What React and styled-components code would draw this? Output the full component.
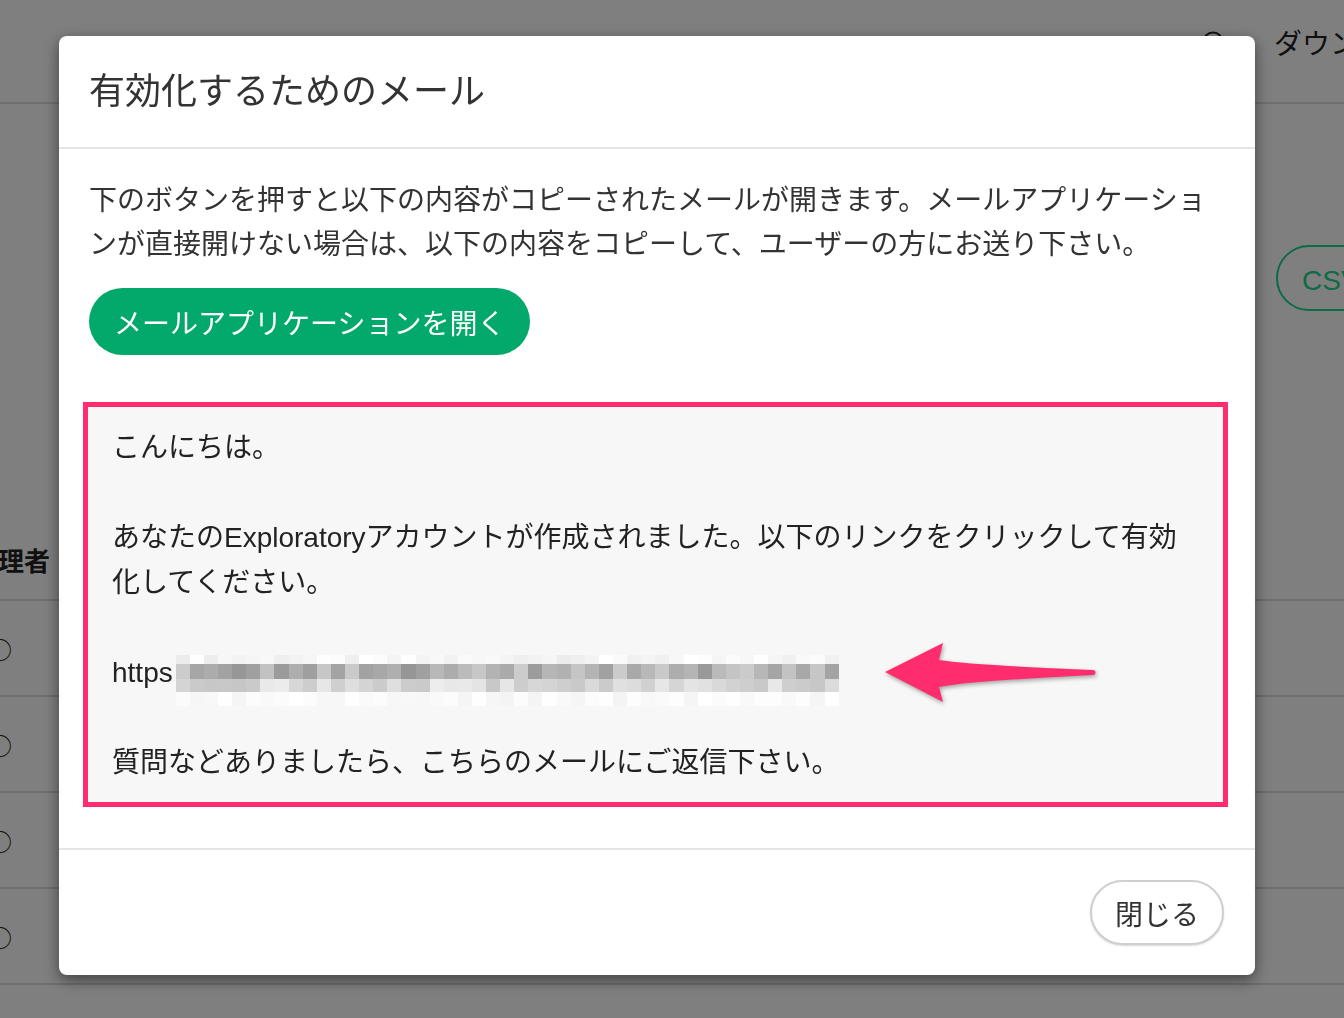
import React from 'react';
import styled, { createGlobalStyle } from 'styled-components';

const GlobalStyle = createGlobalStyle`
  html, body {
    margin: 0;
    padding: 0;
  }
  body {
    width: 1344px;
    height: 1018px;
    overflow: hidden;
    background: #fff;
    color: #333;
    font-family: "Liberation Sans", "Noto Sans CJK JP", sans-serif;
  }
`;

// Page behind the dialog
const Page = styled.div`
  width: 1344px;
  height: 1018px;
  overflow: hidden;
  background: #fff;
`;

const TopBar = styled.header`
  height: 104px;
  box-sizing: border-box;
  border-bottom: 2px solid #dedede;
  display: grid;
  grid-template-columns: 1fr 142px;
`;

const TopRight = styled.div`
  display: flex;
  align-items: center;
  gap: 50px;
  height: 28px;
  margin-top: 28px;
  white-space: nowrap;
  overflow: hidden;
  font-size: 28px;
  color: #222;

  & > * {
    flex-shrink: 0;
  }
`;

const Toolbar = styled.div`
  height: 416px;
  box-sizing: border-box;
  padding-top: 141px;
  display: grid;
  grid-template-columns: 1fr 68px;
  overflow: hidden;
`;

const CsvButton = styled.button`
  width: 200px;
  height: 66px;
  border: 2px solid #1bd68d;
  border-radius: 33px;
  background: #fff;
  color: #1bd68d;
  font-family: inherit;
  font-size: 28px;
  text-align: left;
  white-space: nowrap;
  padding: 0 24px;
`;

const TableHead = styled.div`
  height: 81px;
  box-sizing: border-box;
  border-bottom: 2px solid #dcdcdc;
  display: flex;
  align-items: center;
  margin-left: -28px;
  font-size: 26px;
  font-weight: 700;
  color: #222;
`;

const TableRow = styled.div`
  height: 96px;
  box-sizing: border-box;
  border-bottom: 2px solid #dcdcdc;
  display: flex;
  align-items: center;
  margin-left: -12px;
  font-family: "Noto Sans CJK JP", sans-serif;
  font-size: 24px;
  color: #222;
`;

// Dialog
const Overlay = styled.div`
  position: fixed;
  inset: 0;
  background: rgba(0, 0, 0, 0.5);
  padding: 36px 0 0 59px;
`;

const Modal = styled.div`
  width: 1196px;
  background: #fff;
  border-radius: 8px;
  box-shadow: 0 5px 15px rgba(0, 0, 0, 0.5);
  overflow: hidden;
`;

const ModalHeader = styled.div`
  height: 113px;
  box-sizing: border-box;
  border-bottom: 2px solid #e5e5e5;
  padding: 0 30px;
  display: flex;
  align-items: center;
`;

const Title = styled.h4`
  margin: 0;
  font-size: 36px;
  font-weight: 400;
  line-height: 1;
  color: #333;
`;

const ModalBody = styled.div`
  padding: 30px 30px 41px 30px;
`;

const Lead = styled.p`
  margin: 0;
  font-size: 28px;
  line-height: 44px;
  color: #333;
`;

const MailButton = styled.button`
  margin-top: 21px;
  height: 67px;
  padding: 0 25px;
  border: none;
  border-radius: 34px;
  background: #03a96b;
  color: #fff;
  font-family: inherit;
  font-size: 28px;
`;

const MailBox = styled.div`
  position: relative;
  margin: 47px 0 0 -6px;
  width: 1145px;
  box-sizing: border-box;
  border: 5px solid #ff2d6d;
  background: #f7f7f7;
  padding: 18px 24px 17px 24px;
  font-size: 28px;
  line-height: 45px;
  color: #222;
`;

const Line = styled.div`
  min-height: 45px;
`;

const UrlLine = styled.div`
  height: 45px;
  display: flex;
  align-items: center;
`;

const Blur = styled.div`
  margin: 15px 0 0 3px;
  width: 663px;
  height: 51px;
  display: grid;
  grid-template-columns: repeat(47, 1fr);
  grid-template-rows: 9px 15px 13px 14px;
`;

const Cell = styled.span`
  display: block;
`;

const Arrow = styled.svg`
  position: absolute;
  left: 792px;
  top: 225px;
  overflow: visible;
  filter: drop-shadow(1px 2px 2px rgba(0, 0, 0, 0.35));
`;

const ModalFooter = styled.div`
  height: 127px;
  box-sizing: border-box;
  border-top: 2px solid #e5e5e5;
  padding: 0 31px;
  display: flex;
  align-items: center;
  justify-content: flex-end;
`;

const CloseButton = styled.button`
  height: 65px;
  padding: 0 23px;
  border: 2px solid #cfcfcf;
  border-radius: 33px;
  background: #fff;
  box-shadow: 0 1px 2px rgba(0, 0, 0, 0.15);
  color: #333;
  font-family: inherit;
  font-size: 28px;
`;

// pixelated blur of the hidden URL
const rowRanges = [
  [236, 255],
  [150, 205],
  [198, 238],
  [244, 255],
];

const shade = (r, c) => {
  const n = Math.sin(r * 91.7 + c * 12.9898) * 43758.5453;
  const t = n - Math.floor(n);
  const [lo, hi] = rowRanges[r];
  return Math.round(lo + (hi - lo) * t);
};

const blurCells = [];
for (let r = 0; r < 4; r++) {
  for (let c = 0; c < 47; c++) {
    const g = shade(r, c);
    blurCells.push(`rgb(${g},${g},${g})`);
  }
}

const rows = [0, 1, 2, 3];

const App = () => {
  return (
    <>
      <GlobalStyle />
      <Page>
        <TopBar>
          <div />
          <TopRight>
            <svg width="22" height="22" viewBox="0 0 22 22">
              <circle cx="11" cy="11" r="9.5" fill="none" stroke="#222" strokeWidth="2" />
            </svg>
            <span>ダウンロード</span>
          </TopRight>
        </TopBar>
        <Toolbar>
          <div />
          <div>
            <CsvButton>CSVで出力</CsvButton>
          </div>
        </Toolbar>
        <TableHead>管理者</TableHead>
        {rows.map((r) => (
          <TableRow key={r}>○</TableRow>
        ))}
      </Page>

      <Overlay>
        <Modal>
          <ModalHeader>
            <Title>有効化するためのメール</Title>
          </ModalHeader>
          <ModalBody>
            <Lead>
              下のボタンを押すと以下の内容がコピーされたメールが開きます。メールアプリケーションが直接開けない場合は、以下の内容をコピーして、ユーザーの方にお送り下さい。
            </Lead>
            <MailButton>メールアプリケーションを開く</MailButton>
            <MailBox>
              <Line>こんにちは。</Line>
              <Line />
              <Line>
                あなたのExploratoryアカウントが作成されました。以下のリンクをクリックして有効化してください。
              </Line>
              <Line />
              <UrlLine>
                https
                <Blur>
                  {blurCells.map((color, i) => (
                    <Cell key={i} style={{ background: color }} />
                  ))}
                </Blur>
              </UrlLine>
              <Line />
              <Line>質問などありましたら、こちらのメールにご返信下さい。</Line>
              <Arrow width="220" height="72" viewBox="0 0 220 72">
                <path
                  d="M5 40 L63 11 L59 28 Q 90 33 213 38 A 2.5 2.5 0 0 1 213 43 Q 90 49 59 55 L63 70 Z"
                  fill="#ff2d6d"
                />
              </Arrow>
            </MailBox>
          </ModalBody>
          <ModalFooter>
            <CloseButton>閉じる</CloseButton>
          </ModalFooter>
        </Modal>
      </Overlay>
    </>
  );
};

export default App;
